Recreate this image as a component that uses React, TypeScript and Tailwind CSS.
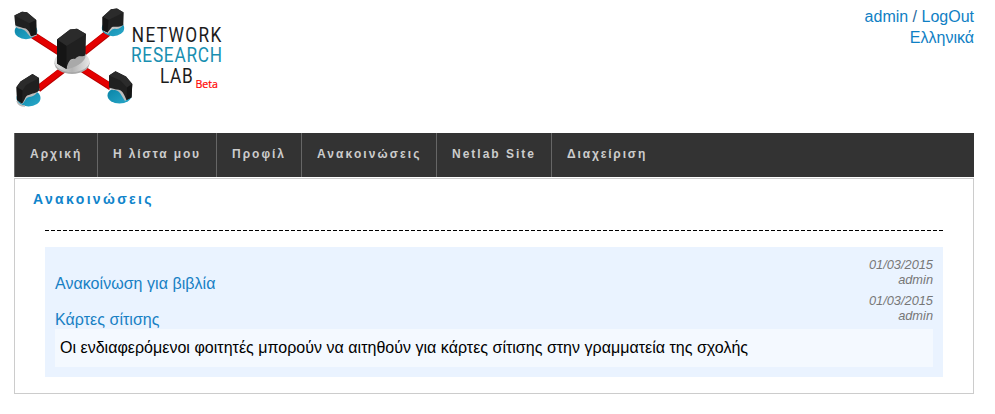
import React from "react";

const navItems = [
  { label: "Αρχική", width: "w-[83px]", tracking: "tracking-[2px]" },
  { label: "Η λίστα μου", width: "w-[119px]", tracking: "tracking-[1.85px]" },
  { label: "Προφίλ", width: "w-[85px]", tracking: "tracking-[2px]" },
  { label: "Ανακοινώσεις", width: "w-[135px]", tracking: "tracking-[2.08px]" },
  { label: "Netlab Site", width: "w-[115px]", tracking: "tracking-[2px]" },
  { label: "Διαχείριση", width: "w-[120px]", tracking: "tracking-[1.85px]" },
];

const announcements = [
  { title: "Ανακοίνωση για βιβλία", date: "01/03/2015", author: "admin" },
  { title: "Κάρτες σίτισης", date: "01/03/2015", author: "admin" },
];

function Logo() {
  return (
    <svg width="240" height="115" viewBox="0 0 240 115" className="block">
      <defs>
        <linearGradient id="plate" x1="0" x2="1">
          <stop offset="0" stopColor="#dedede" />
          <stop offset="0.5" stopColor="#b4b4b4" />
          <stop offset="1" stopColor="#e6e6e6" />
        </linearGradient>
        <linearGradient id="disc" x1="0" x2="1" y2="1">
          <stop offset="0" stopColor="#0782a5" />
          <stop offset="1" stopColor="#2ba9ca" />
        </linearGradient>
      </defs>
      {/* cables */}
      <g stroke="#b90000" strokeWidth="7">
        <path d="M32 34.5 L60 52.5M84 52 L108 33M38 89 L64 69M81 68 L111 87" />
      </g>
      <g stroke="#e40000" strokeWidth="5.4">
        <path d="M32 34.2 L60 52.2M84 51.7 L108 32.7M38 88.7 L64 68.7M81 67.7 L111 86.7" />
      </g>
      {/* top-left node */}
      <ellipse cx="26" cy="31" rx="11.3" ry="8.3" fill="url(#disc)" />
      <path d="M15 26 C18 30 21 28 24 30 C27 32 29 36 31 37 L37 35.5 L34 28Z" fill="#b9b9b9" />
      <path d="M14.3 15.5 L22 11.7 L27 12.2 L36.2 20 L36.5 34.5 L31 36.3 C29 31 27 28 23 28 L15.3 25.5Z" fill="#202020" />
      <path d="M14.3 15.5 L22 11.7 L27 12.2 L36.2 20 L29.5 23.3Z" fill="#2b2b2b" />
      <path d="M29.5 23.3 L36.2 20 L36.5 34.5 L31 36.3Z" fill="#171717" />
      {/* top-right node */}
      <ellipse cx="113" cy="28" rx="11.2" ry="8.3" fill="url(#disc)" />
      <path d="M103 31 L108 34 C110 32 112 28 116 29 C119 29 122 27 123.5 24 L112 20Z" fill="#c3c3c3" />
      <path d="M102.5 17 L111 9.3 L117 8.5 L123.7 12.5 L123.3 25 C118 28 115 26 112 27 L107.5 32.5 L102.5 30Z" fill="#202020" />
      <path d="M102.5 17 L111 9.3 L117 8.5 L123.7 12.5 L108.5 20Z" fill="#2b2b2b" />
      <path d="M102.5 17 L108.5 20 L107.5 32.5 L102.5 30Z" fill="#151515" />
      {/* central node */}
      <ellipse cx="72" cy="63.2" rx="17.5" ry="10.8" fill="#aaaaaa" />
      <ellipse cx="72" cy="61.5" rx="17.5" ry="10.5" fill="url(#plate)" />
      <path d="M66 69 L68 61 C74 61 73 57 78 57 L85.5 55 C86 60 80 66 68 69Z" fill="#a9a9a9" />
      <path d="M57 39.5 L70 29.5 L77 28.7 L86 34 L85.5 55 C82 58 79 54 75 59 C71 58 68 61 66.5 69 L57 63.5Z" fill="#202020" />
      <path d="M57 39.5 L70 29.5 L77 28.7 L86 34 L66.5 46Z" fill="#2b2b2b" />
      <path d="M57 39.5 L66.5 46 L66.5 69 L57 63.5Z" fill="#151515" />
      {/* bottom-left node */}
      <ellipse cx="28.5" cy="98" rx="12" ry="8.5" fill="url(#disc)" />
      <path d="M17 100 L22 104 C26 101 25 98 29 97 C34 97 37 93 40 89 L34 84 L18 92Z" fill="#bdbdbd" />
      <path d="M17 101 C18 104 21 106 25 106" fill="none" stroke="#b8b8b8" strokeWidth="1.5" />
      <path d="M16.5 87 L20.5 81.5 L32.5 74 L39 78 L39.5 90 C36 94 32 93 29 95 C25 95 25 101 22 103.5 L17 100Z" fill="#202020" />
      <path d="M16.5 87 L20.5 81.5 L32.5 74 L39 78 L26 85 L22.5 90.5Z" fill="#2b2b2b" />
      <path d="M16.5 87 L22.5 90.5 L22 103.5 L17 100Z" fill="#151515" />
      {/* bottom-right node */}
      <ellipse cx="119.5" cy="95.5" rx="12" ry="8" fill="url(#disc)" />
      <path d="M109 88 C113 92 116 88 120 93 L125 101 L131 97 L126 85Z" fill="#bdbdbd" />
      <path d="M109 75.5 L115.5 71.2 L126 76.5 L132.3 84 L131.5 97.5 L126.5 100 C124 94 122 89 116 89.5 L109 87.5Z" fill="#202020" />
      <path d="M109 75.5 L115.5 71.2 L126 76.5 L132.3 84 L127 87.5 L120.5 80.5Z" fill="#2b2b2b" />
      <path d="M127 87.5 L132.3 84 L131.5 97.5 L126.5 100Z" fill="#151515" />
      {/* wordmark: condensed glyphs with open spacing */}
      <g fontFamily="Roboto, 'Liberation Sans', sans-serif" fontSize="21">
        <text transform="translate(131.8 41.8) scale(.82 1)" textLength="109" fill="#1c1c1c">NETWORK</text>
        <text transform="translate(131 62) scale(.82 1)" textLength="111" fill="#198fb1">RESEARCH</text>
        <text transform="translate(160 82.6) scale(.82 1)" textLength="40" fill="#1c1c1c">LAB</text>
      </g>
      <text x="195.5" y="88" textLength="22.5" lengthAdjust="spacingAndGlyphs" fontFamily="'Open Sans', sans-serif" fontSize="11" fill="#ff0000" stroke="#ff0000" strokeWidth="0.2">Beta</text>
    </svg>
  );
}

export default function App() {
  return (
    <div className="h-[414px] w-[995px] overflow-hidden bg-white font-['Liberation_Sans',Arial,sans-serif] text-base text-black">
      <header className="flex h-[133px] justify-between pr-[21px]">
        <Logo />
        <div className="pt-[6px] text-right leading-[21px] text-[#0f80c4]">
          <div>
            <a href="#">admin</a> <span className="text-[#28699e]">/</span> <a href="#">LogOut</a>
          </div>
          <a href="#" className="block">Ελληνικά</a>
        </div>
      </header>
      <nav className="ml-[14px] flex h-11 w-[960px] bg-[#333333]">
        {navItems.map((item) => (
          <a
            key={item.label}
            href="#"
            className={`${item.width} ${item.tracking} shrink-0 border-l border-[#666666] pl-[15px] text-xs leading-[43px] font-bold whitespace-nowrap text-[#cccccc]`}
          >
            {item.label}
          </a>
        ))}
      </nav>
      <main className="mt-px ml-[14px] h-[216px] w-[960px] border border-[#cccccc] pr-[30px] pl-[30px]">
        <h1 className="-ml-3 pt-[10px] text-sm leading-5 font-bold tracking-[2.35px] text-[#0f84cb]">Ανακοινώσεις</h1>
        <svg width="898" height="1" className="mt-[21px] block">
          <path d="M0 .5H898" stroke="#000" strokeDasharray="4 2" />
        </svg>
        <section className="mt-4 h-[130px] bg-[#eaf3ff] px-[10px] pt-[10px]">
          {announcements.map((item) => (
            <div key={item.title} className="flex h-9 items-start justify-between">
              <a href="#" className="pt-[17px] leading-5 tracking-[0.04px] text-[#1780c4]">{item.title}</a>
              <div className="text-right text-[12.8px] leading-[15px] text-[#777777] italic">
                <div>{item.date}</div>
                <div>{item.author}</div>
              </div>
            </div>
          ))}
          <p className="h-[38px] bg-[#f4f9ff] px-[5px] leading-[37px] tracking-[0.02px]">
            Οι ενδιαφερόμενοι φοιτητές μπορούν να αιτηθούν για κάρτες σίτισης στην γραμματεία της σχολής
          </p>
        </section>
      </main>
    </div>
  );
}
